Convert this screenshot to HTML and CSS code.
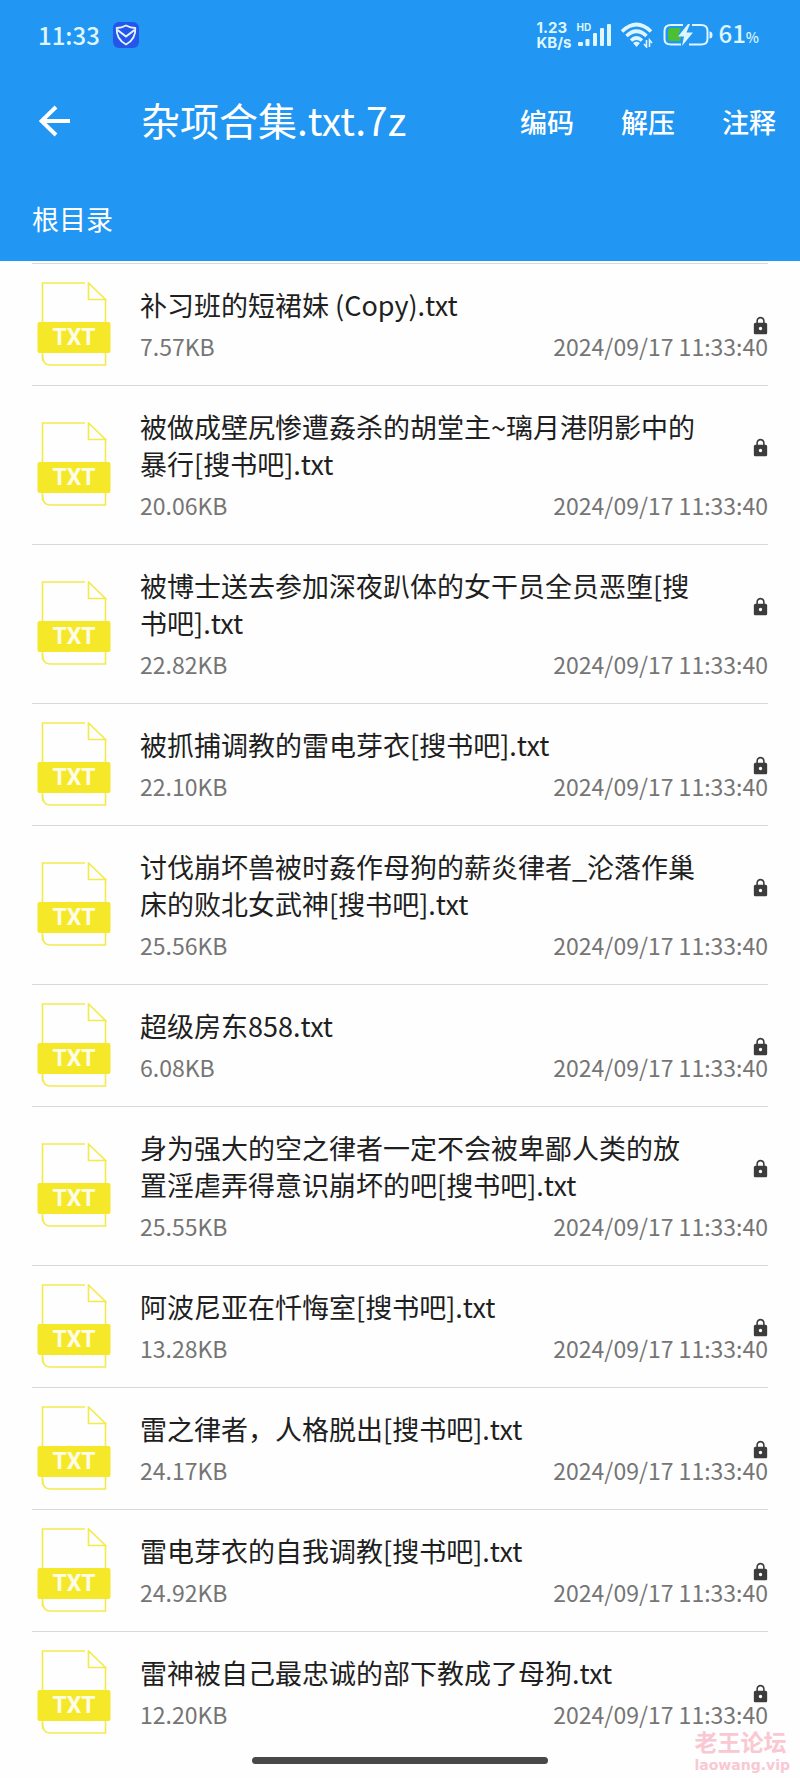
FILE: index.html
```html
<!DOCTYPE html>
<html lang="zh-CN">
<head>
<meta charset="utf-8">
<meta name="viewport" content="width=device-width, initial-scale=1">
<title>杂项合集.txt.7z</title>
<link rel="stylesheet" href="styles.css">
</head>
<body>
<svg class="symbols" aria-hidden="true">
  <symbol id="txt" viewBox="0 0 74 85">
    <g fill="none" stroke="#f3ea4c" stroke-width="1.6">
      <path d="M48 1H5.500V78.500"/>
      <path d="M68.500 17.500V83H13Q5.500 83 5.500 73"/>
      <path d="M51.500 1V17.500H68.500Z"/>
    </g>
    <rect x="0.500" y="40" width="73" height="31" rx="2" fill="#f5e829"/>
  </symbol>
  <symbol id="lock" viewBox="3 0 18 24">
    <path fill="#3c3c3c" fill-rule="evenodd" d="M18 8h-1V6c0-2.760-2.240-5-5-5S7 3.240 7 6v2H6c-1.100 0-2 .9-2 2v10c0 1.100.9 2 2 2h12c1.100 0 2-.9 2-2V10c0-1.100-.9-2-2-2zm-6 9c-1.100 0-2-.9-2-2s.9-2 2-2 2 .9 2 2-.9 2-2 2zm3.100-9H8.900V6c0-1.710 1.390-3.100 3.100-3.100s3.100 1.390 3.100 3.100v2z"/>
  </symbol>
</svg>

<header class="header">
  <div class="status">
    <span class="clock">11:33</span>
    <svg class="shield" viewBox="0 0 26 26" aria-hidden="true">
      <rect width="26" height="26" rx="6" fill="#2456ea"/>
      <path d="M13 3.500Q17.500 6 22.300 6Q23 17 13 22.500Q3 17 3.700 6Q8.500 6 13 3.500Z" fill="none" stroke="#e6f4ff" stroke-width="1.800" stroke-linejoin="round"/>
      <path d="M4.500 8L13 14.500L21.500 8" fill="none" stroke="#e6f4ff" stroke-width="2"/>
    </svg>
    <span class="speed"><span>1.23</span><span>KB/s</span></span>
    <span class="network">
      <span class="hd">HD</span>
      <svg class="signal" viewBox="0 0 36 26" aria-hidden="true">
        <g fill="#dff6ff">
          <rect x="2" y="20" width="5" height="4" rx="1"/>
          <rect x="9.500" y="17" width="4" height="7" rx="1"/>
          <rect x="17" y="11" width="4" height="13" rx="1"/>
          <rect x="24" y="6" width="4" height="18" rx="1"/>
          <rect x="31" y="2" width="4" height="22" rx="1"/>
        </g>
      </svg>
    </span>
    <svg class="wifi" viewBox="0 0 34 26" aria-hidden="true">
      <g fill="none" stroke="#dff6ff" stroke-width="3.600">
        <path d="M2 9.500Q16.500 -4.500 31 9.500"/>
        <path d="M6.500 14Q16.500 4.500 26.500 14"/>
        <path d="M11 18.500Q16.500 13.500 22 18.500"/>
      </g>
      <path d="M13 21Q16.500 18 20 21L16.500 25Z" fill="#dff6ff"/>
      <path d="M26.500 18V25L24 22M29.500 25V18L32 21" fill="none" stroke="#dff6ff" stroke-width="1.600"/>
    </svg>
    <svg class="battery" viewBox="0 0 50 26" aria-hidden="true">
      <path d="M20 3H8Q1.500 3 1.500 9V17Q1.500 22.500 8 22.500H18M29 3H38Q44.500 3 44.500 9V17Q44.500 22.500 38 22.500H26" fill="none" stroke="#dff6ff" stroke-width="2"/>
      <path d="M8 6H18L15 14L18 15L17 19H8Q5 19 5 16V9Q5 6 8 6Z" fill="#4cbf34"/>
      <path d="M25 2L15 14.500H21L19 24L30 10.500H23.500L27 2Z" fill="#dff6ff"/>
      <path d="M46.500 9.500Q49.500 9.500 49.500 13Q49.500 16.500 46.500 16.500Z" fill="#dff6ff"/>
    </svg>
    <span class="percent">61<small>%</small></span>
  </div>
  <div class="toolbar">
    <button class="back" type="button" aria-label="返回">
      <svg viewBox="0 0 32 32" aria-hidden="true"><path d="M31 16H2.500M17 2L2.500 16L17 30" fill="none" stroke="#fff" stroke-width="4"/></svg>
    </button>
    <h1 class="title">杂项合集.txt.7z</h1>
    <button class="action" type="button">编码</button>
    <button class="action" type="button">解压</button>
    <button class="action" type="button">注释</button>
  </div>
  <nav class="path"><a href="#">根目录</a></nav>
</header>

<main>
<ul class="files">
  <li class="file"><span class="icon"><svg><use href="#txt"/></svg><b>TXT</b></span><span class="name">补习班的短裙妹 (Copy).txt</span><svg class="lock"><use href="#lock"/></svg><span class="meta"><span>7.57KB</span><time>2024/09/17 11:33:40</time></span></li>
  <li class="file"><span class="icon"><svg><use href="#txt"/></svg><b>TXT</b></span><span class="name">被做成壁尻惨遭姦杀的胡堂主~璃月港阴影中的暴行[搜书吧].txt</span><svg class="lock"><use href="#lock"/></svg><span class="meta"><span>20.06KB</span><time>2024/09/17 11:33:40</time></span></li>
  <li class="file"><span class="icon"><svg><use href="#txt"/></svg><b>TXT</b></span><span class="name">被博士送去参加深夜趴体的女干员全员恶堕[搜书吧].txt</span><svg class="lock"><use href="#lock"/></svg><span class="meta"><span>22.82KB</span><time>2024/09/17 11:33:40</time></span></li>
  <li class="file"><span class="icon"><svg><use href="#txt"/></svg><b>TXT</b></span><span class="name">被抓捕调教的雷电芽衣[搜书吧].txt</span><svg class="lock"><use href="#lock"/></svg><span class="meta"><span>22.10KB</span><time>2024/09/17 11:33:40</time></span></li>
  <li class="file"><span class="icon"><svg><use href="#txt"/></svg><b>TXT</b></span><span class="name">讨伐崩坏兽被时姦作母狗的薪炎律者_沦落作巢床的败北女武神[搜书吧].txt</span><svg class="lock"><use href="#lock"/></svg><span class="meta"><span>25.56KB</span><time>2024/09/17 11:33:40</time></span></li>
  <li class="file"><span class="icon"><svg><use href="#txt"/></svg><b>TXT</b></span><span class="name">超级房东858.txt</span><svg class="lock"><use href="#lock"/></svg><span class="meta"><span>6.08KB</span><time>2024/09/17 11:33:40</time></span></li>
  <li class="file"><span class="icon"><svg><use href="#txt"/></svg><b>TXT</b></span><span class="name">身为强大的空之律者一定不会被卑鄙人类的放置淫虐弄得意识崩坏的吧[搜书吧].txt</span><svg class="lock"><use href="#lock"/></svg><span class="meta"><span>25.55KB</span><time>2024/09/17 11:33:40</time></span></li>
  <li class="file"><span class="icon"><svg><use href="#txt"/></svg><b>TXT</b></span><span class="name">阿波尼亚在忏悔室[搜书吧].txt</span><svg class="lock"><use href="#lock"/></svg><span class="meta"><span>13.28KB</span><time>2024/09/17 11:33:40</time></span></li>
  <li class="file"><span class="icon"><svg><use href="#txt"/></svg><b>TXT</b></span><span class="name">雷之律者，人格脱出[搜书吧].txt</span><svg class="lock"><use href="#lock"/></svg><span class="meta"><span>24.17KB</span><time>2024/09/17 11:33:40</time></span></li>
  <li class="file"><span class="icon"><svg><use href="#txt"/></svg><b>TXT</b></span><span class="name">雷电芽衣的自我调教[搜书吧].txt</span><svg class="lock"><use href="#lock"/></svg><span class="meta"><span>24.92KB</span><time>2024/09/17 11:33:40</time></span></li>
  <li class="file"><span class="icon"><svg><use href="#txt"/></svg><b>TXT</b></span><span class="name">雷神被自己最忠诚的部下教成了母狗.txt</span><svg class="lock"><use href="#lock"/></svg><span class="meta"><span>12.20KB</span><time>2024/09/17 11:33:40</time></span></li>
</ul>
</main>
<div class="home"></div>
<div class="watermark"><span class="mark-name">老王论坛</span><span class="mark-site">laowang.vip</span></div>
</body>
</html>
```
FILE: styles.css
```css
* { box-sizing: border-box; }

body {
  margin: 0;
  min-height: 100vh;
  position: relative;
  display: flex;
  flex-direction: column;
  background: #fefefe;
  color: #1f1f1f;
  font-family: "Noto Sans CJK SC", sans-serif;
}

.symbols { position: absolute; width: 0; height: 0; }

button {
  padding: 0;
  border: 0;
  background: none;
  color: inherit;
  font: inherit;
}

.header { background: #2196f3; color: #fff; }

.status {
  display: flex;
  align-items: center;
  height: 70px;
  padding: 0 41px 0 38px;
  color: #dff6ff;
}
.clock { font-size: 24px; font-weight: 500; line-height: 36px; }
.shield { width: 26px; height: 26px; margin-left: 13px; }
.speed {
  display: flex;
  flex-direction: column;
  margin-left: auto;
  font: 700 15px/15px Inter, sans-serif;
}
.network { position: relative; width: 36px; height: 26px; margin-left: 5px; }
.signal { display: block; width: 36px; height: 26px; }
.hd { position: absolute; top: 0; left: 0; font: 700 10px/10px Inter, sans-serif; }
.wifi { width: 34px; height: 26px; margin-left: 8px; }
.battery { width: 50px; height: 26px; margin-left: 9px; }
.percent { margin-left: 5px; font-size: 24px; font-weight: 500; line-height: 36px; }
.percent small { font-size: 14px; }

.toolbar {
  display: flex;
  align-items: center;
  height: 102px;
  padding: 0 24px 0 39px;
}
.back { width: 32px; height: 32px; margin-right: 70px; }
.back svg { display: block; width: 32px; height: 32px; }
.title { flex: 1; margin: 0; padding-bottom: 4px; font-size: 39px; font-weight: 400; line-height: 56px; }
.action { margin-left: 47px; font-size: 27px; font-weight: 500; }

.path { height: 89px; padding: 27px 32px; font-size: 27px; line-height: 40px; }
.path a { color: #fff; text-decoration: none; }

main { flex: 1; }
.files { margin: 0; padding: 2px 32px 0; list-style: none; }
.file {
  display: grid;
  grid-template-columns: 74px 1fr 15px;
  grid-template-rows: auto 37px;
  row-gap: 7px;
  padding: 17px 0 18px 5px;
  border-top: 1px solid #d8d8db;
}
.icon { position: relative; grid-area: 1 / 1 / 3 / 2; align-self: center; width: 74px; height: 85px; }
.icon svg { display: block; width: 74px; height: 85px; }
.icon b {
  position: absolute;
  top: 40px;
  left: 0;
  width: 100%;
  color: #fffde8;
  font: 700 23px/31px Roboto, sans-serif;
  text-align: center;
}
.name { grid-area: 1 / 2; margin: 0 52px 0 29px; padding-top: 5px; font-size: 27px; line-height: 37px; }
.lock { grid-area: 1 / 3 / 3 / 4; width: 15px; height: 20px; margin-top: 35px; }
.meta {
  grid-area: 2 / 2 / 3 / 4;
  display: flex;
  justify-content: space-between;
  margin-left: 29px;
  color: #757575;
  font-size: 23px;
  line-height: 32px;
}

.home {
  width: 37%;
  height: 7px;
  margin: 0 auto 14px;
  border-radius: 4px;
  background: #484848;
}

.watermark {
  position: absolute;
  right: 10px;
  bottom: 3px;
  display: flex;
  flex-direction: column;
  color: #f9c8d2;
  font-weight: 700;
}
.mark-name { font-size: 23px; line-height: 28px; }
.mark-site { font: 700 14px/20px "DejaVu Sans", sans-serif; }
```
